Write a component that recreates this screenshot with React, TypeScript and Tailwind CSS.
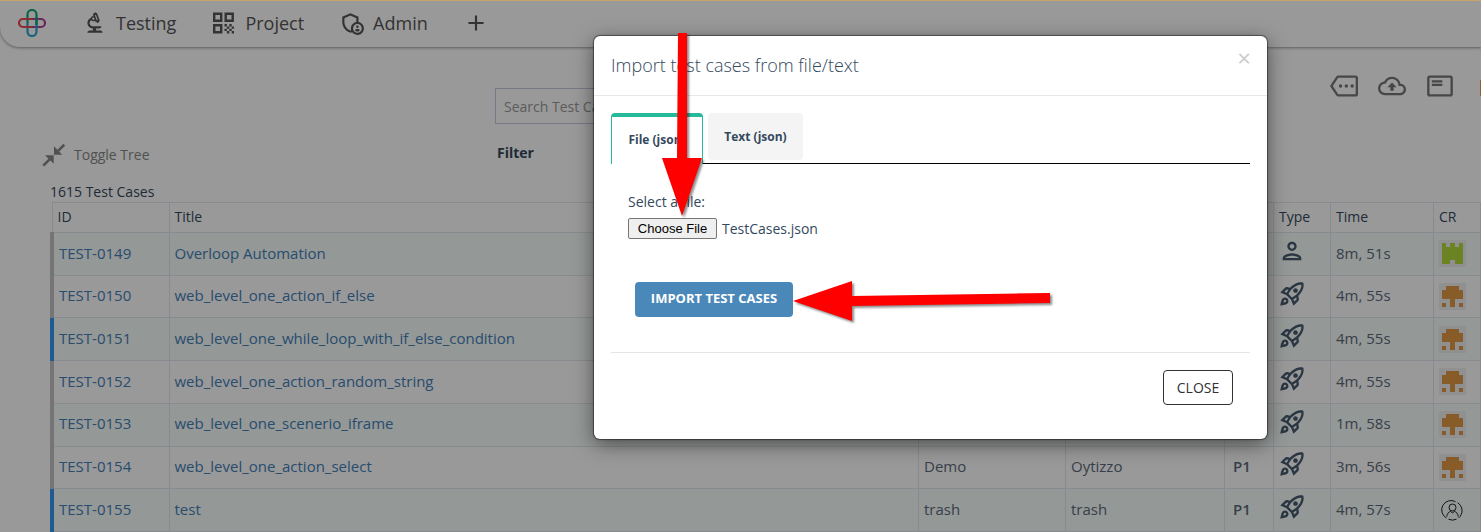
import type { ReactNode } from "react";
import {
  MdAdd,
  MdOutlineAdminPanelSettings,
  MdOutlineBackup,
  MdOutlineBiotech,
  MdOutlineFeaturedPlayList,
  MdOutlineMore,
  MdOutlinePerson,
  MdOutlineRocketLaunch,
} from "react-icons/md";

type Creator = "castle" | "tree" | "person";

interface TestCase {
  id: string;
  title: string;
  folder: string;
  owner: string;
  manual?: boolean;
  marked?: boolean;
  time: string;
  creator: Creator;
}

const testCases: TestCase[] = [
  { id: "TEST-0149", title: "Overloop Automation", folder: "", owner: "", manual: true, time: "8m, 51s", creator: "castle" },
  { id: "TEST-0150", title: "web_level_one_action_if_else", folder: "", owner: "", time: "4m, 55s", creator: "tree" },
  { id: "TEST-0151", title: "web_level_one_while_loop_with_if_else_condition", folder: "", owner: "", marked: true, time: "4m, 55s", creator: "tree" },
  { id: "TEST-0152", title: "web_level_one_action_random_string", folder: "", owner: "", time: "4m, 55s", creator: "tree" },
  { id: "TEST-0153", title: "web_level_one_scenerio_iframe", folder: "", owner: "", time: "1m, 58s", creator: "tree" },
  { id: "TEST-0154", title: "web_level_one_action_select", folder: "Demo", owner: "Oytizzo", time: "3m, 56s", creator: "tree" },
  { id: "TEST-0155", title: "test", folder: "trash", owner: "trash", marked: true, time: "4m, 57s", creator: "person" },
];

function Logo() {
  return (
    <svg viewBox="0 0 28 28" className="size-7" fill="none" strokeWidth="2.2" aria-hidden="true">
      <path d="M9.500 14V5.500a4.500 4.500 0 0 1 9 0V14" stroke="#10a779" />
      <path d="M14 10h9a4 4 0 0 1 0 8h-9" stroke="#b0429c" />
      <path d="M18.500 14v8.500a4.500 4.500 0 0 1-9 0V14" stroke="#2aa5d8" />
      <path d="M14 18H5a4 4 0 0 1 0-8h9" stroke="#e84a50" />
      <path d="M18.500 8v8" stroke="#10a779" />
    </svg>
  );
}

function QrIcon() {
  return (
    <svg viewBox="0 0 26 26" className="size-[26px]" fill="none" stroke="currentColor" strokeWidth="2.4" aria-hidden="true">
      <path d="M3.200 3.700h7v7h-7zM14.700 3.700h7v7h-7zM3.200 15.200h7v7h-7z" />
      <path
        fill="currentColor"
        stroke="none"
        d="M13.500 14h2.400v2.400h2.400v-2.400h2.400v2.400h2.300v2.400h-2.300v2.300h2.300v2.400h-2.300v-2.400h-2.400v2.400h-2.400v-2.400h-2.400v-2.300h2.400v-2.400h-2.400zM15.900 18.800v2.300h2.400v-2.300zM18.300 16.400v2.400h2.400v-2.400z"
        fillRule="evenodd"
      />
    </svg>
  );
}

function CollapseIcon() {
  return (
    <svg viewBox="0 0 24 24" className="size-6" fill="currentColor" stroke="currentColor" strokeWidth="0" aria-hidden="true">
      <path d="M12 3.300v8.500h8.300zM11.700 20.800v-8.500H3z" />
      <path d="M22.300 1.700l-6.500 6.400M1.300 22.700l6.500-6.500" strokeWidth="2.600" />
    </svg>
  );
}

function CreatorIcon({ kind }: { kind: Creator }) {
  if (kind === "person") {
    return (
      <svg viewBox="0 0 27 27" className="size-[27px]" fill="none" stroke="#222" strokeWidth="1" role="img" aria-label="User">
        <path d="M7.500 21a9.300 9.300 0 0 1 9-16.300M18.500 5.700a9.300 9.300 0 0 1 1 15.300M9.500 22.200a9.300 9.300 0 0 0 8 0" />
        <circle cx="13.500" cy="10.500" r="3.500" />
        <path d="M7.800 19.500c.3-3 1.800-4.500 3.700-5l2 1.300 2-1.300c1.900.5 3.400 2 3.700 5" />
      </svg>
    );
  }
  return (
    <svg viewBox="0 0 27 27" className="size-[27px]" shapeRendering="crispEdges" role="img" aria-label="User">
      <path fill="#f0f0f0" d="M0 0h27v27H0z" />
      {kind === "castle" ? (
        <path fill="#b4da3c" d="M3 3h4v4h4V3h5v4h4V3h4v21h-8v-4h-5v4H3z" />
      ) : (
        <path fill="#e29a45" d="M7 3h13v4h4v9h-8v8h-5v-8H3V7h4zM3 20h4v4H3zM20 20h4v4h-4z" />
      )}
    </svg>
  );
}

function NavItem({ icon, label }: { icon: ReactNode; label: string }) {
  return (
    <a href="#" className="flex items-center gap-2">
      {icon}
      {label}
    </a>
  );
}

function Header() {
  return (
    <header className="h-[46px] rounded-bl-[20px] bg-white text-lg text-[#555] shadow-[0_1px_3px_rgba(0,0,0,0.4)]">
      <nav className="flex h-[44px] items-center pl-[18px]">
        <a href="#" aria-label="Home">
          <Logo />
        </a>
        <div className="ml-9 flex items-center gap-[35px]">
          <NavItem icon={<MdOutlineBiotech className="size-[26px]" />} label="Testing" />
          <NavItem icon={<QrIcon />} label="Project" />
          <NavItem icon={<MdOutlineAdminPanelSettings className="size-[26px]" />} label="Admin" />
          <button type="button" aria-label="Add">
            <MdAdd className="size-[26px]" />
          </button>
        </div>
      </nav>
    </header>
  );
}

function Toolbar() {
  return (
    <div className="grid grid-cols-[1fr_auto] pt-[41px] pl-[42px]">
      <div className="grid grid-cols-[453px_1fr] gap-y-[15px]">
        <input
          type="search"
          aria-label="Search Test Cases"
          placeholder="Search Test Cases"
          className="col-start-2 h-9 w-[320px] border border-[#c5cbe0] px-2 text-sm placeholder:text-[#999]"
        />
        <button type="button" className="flex items-center gap-2 pt-1 text-sm text-[#888]">
          <CollapseIcon />
          Toggle Tree
        </button>
        <span className="pt-1 pl-[2px] text-sm font-bold text-[#34495e]">Filter</span>
      </div>
      <div className="-mt-4 flex items-start gap-5 text-[#777]">
        <button type="button" aria-label="Tags">
          <MdOutlineMore className="size-7" />
        </button>
        <button type="button" aria-label="Upload">
          <MdOutlineBackup className="size-7" />
        </button>
        <button type="button" aria-label="List view">
          <MdOutlineFeaturedPlayList className="size-7" />
        </button>
        <span className="mt-2 ml-[6px] h-4 w-px bg-[#f0a060]" />
      </div>
    </div>
  );
}

const cell = "border border-[#e2e8ee] px-[5px]";

function CaseTable() {
  return (
    <table className="h-[330px] w-full table-fixed border-collapse text-left text-[15px] text-[#5c6b7c]">
      <colgroup>
        <col className="w-[117px]" />
        <col />
        <col className="w-[147px]" />
        <col className="w-[159px]" />
        <col className="w-[49px]" />
        <col className="w-[57px]" />
        <col className="w-[103px]" />
        <col className="w-[47px]" />
      </colgroup>
      <thead>
        <tr className="h-[30px] text-sm text-[#34495e]">
          {["ID", "Title", "Folder", "Owner", "", "Type", "Time", "CR"].map((name, i) => (
            <th key={i} className={`${cell} pb-[2px] font-medium`}>{name}</th>
          ))}
        </tr>
      </thead>
      <tbody>
        {testCases.map((c) => (
          <tr key={c.id} className="h-[42px] odd:bg-[#f7fdfa]">
            <td className={`border border-[#e2e8ee] border-l-4 px-[5px] pb-[2px] ${c.marked ? "border-l-[#3498f0]" : "border-l-[#c4c4c4]"}`}>
              <a href="#" className="text-[#4480b8]">{c.id}</a>
            </td>
            <td className={`${cell} pb-[2px]`}>
              <a href="#" className="text-[#4480b8]">{c.title}</a>
            </td>
            <td className={`${cell} pb-[2px]`}>{c.folder}</td>
            <td className={`${cell} pb-[2px]`}>{c.owner}</td>
            <td className="border border-[#e2e8ee] px-2 pb-[2px] font-semibold">P1</td>
            <td className="border border-[#e2e8ee] px-1 pb-[6px]">
              {c.manual ? (
                <MdOutlinePerson className="size-7 text-[#475a6e]" />
              ) : (
                <MdOutlineRocketLaunch className="size-7 text-[#475a6e]" />
              )}
            </td>
            <td className={`${cell} pb-[2px]`}>{c.time}</td>
            <td className={cell}>
              <CreatorIcon kind={c.creator} />
            </td>
          </tr>
        ))}
      </tbody>
    </table>
  );
}

function ImportDialog() {
  return (
    <section
      role="dialog"
      aria-modal="true"
      aria-labelledby="dialog-title"
      className="absolute top-[35px] left-[594px] w-[673px] rounded-md bg-white text-sm text-[#34495e] shadow-[0_0_1px_1px_rgba(0,0,0,0.45),0_5px_20px_rgba(0,0,0,0.5)]"
    >
      <header className="flex h-[60px] items-center justify-between border-b border-[#e8e8e8] px-4">
        <h2 id="dialog-title" className="pb-[2px] pl-px text-lg font-light">Import test cases from file/text</h2>
        <button type="button" aria-label="Close dialog" className="-mt-4 text-2xl text-[#ccc]">×</button>
      </header>
      <div className="px-[17px] pt-[17px]">
        <div role="tablist" className="flex items-end text-xs font-bold">
          <button
            type="button"
            role="tab"
            aria-selected="true"
            className="h-[51px] w-[92px] rounded-t-[4px] border-x border-t-4 border-[#26b99a] pb-[2px]"
          >
            File (json)
          </button>
          <div className="flex h-[51px] flex-1 items-start border-b border-black pl-[5px]">
            <button type="button" role="tab" aria-selected="false" className="h-[47px] w-[95px] rounded bg-[#f4f4f4]">
              Text (json)
            </button>
          </div>
        </div>
        <form className="border-b border-[#e5e5e5] px-[17px] pt-7 pb-[35px]">
          <label htmlFor="case-file" className="block leading-5">Select a file:</label>
          <div className="mt-[6px] flex h-[21px] items-center gap-[5px]">
            <button
              id="case-file"
              type="button"
              className="h-[21px] w-[89px] rounded-[2px] border border-[#767676] bg-[#efefef] text-[13px] leading-4 text-black [font-family:'Liberation_Sans',sans-serif]"
            >
              Choose File
            </button>
            TestCases.json
          </div>
          <button type="button" className="mt-[43px] ml-[7px] h-[35px] w-[158px] rounded bg-[#4b88ba] pb-[2px] text-[13px] font-bold text-white">
            IMPORT TEST CASES
          </button>
        </form>
        <footer className="flex justify-end px-[17px] pt-[17px] pb-[34px]">
          <button type="button" className="h-[35px] w-[70px] rounded border border-[#333] text-sm font-medium text-[#333]">
            CLOSE
          </button>
        </footer>
      </div>
    </section>
  );
}

function Arrows() {
  return (
    <svg
      viewBox="0 0 400 300"
      className="pointer-events-none absolute top-8 left-[660px] h-[300px] w-[400px] drop-shadow-[2px_2px_1px_rgba(0,0,0,0.45)]"
      fill="#f00"
      aria-hidden="true"
    >
      <path d="M18 0h9v125h15L22 183 2 125h15z" />
      <path d="M133 268l59-20v15l198-3v10l-198 3v15z" />
    </svg>
  );
}

export default function App() {
  return (
    <div className="relative h-screen overflow-hidden border-t border-[#c8a468] bg-white [font-family:'Open_Sans','Noto_Sans',sans-serif]">
      <Header />
      <main>
        <Toolbar />
        <div className="pl-[50px]">
          <p className="pt-[15px] text-sm leading-5 text-[#34495e]">1615 Test Cases</p>
          <CaseTable />
        </div>
      </main>
      <div className="absolute inset-0 bg-black/40" />
      <ImportDialog />
      <Arrows />
    </div>
  );
}
